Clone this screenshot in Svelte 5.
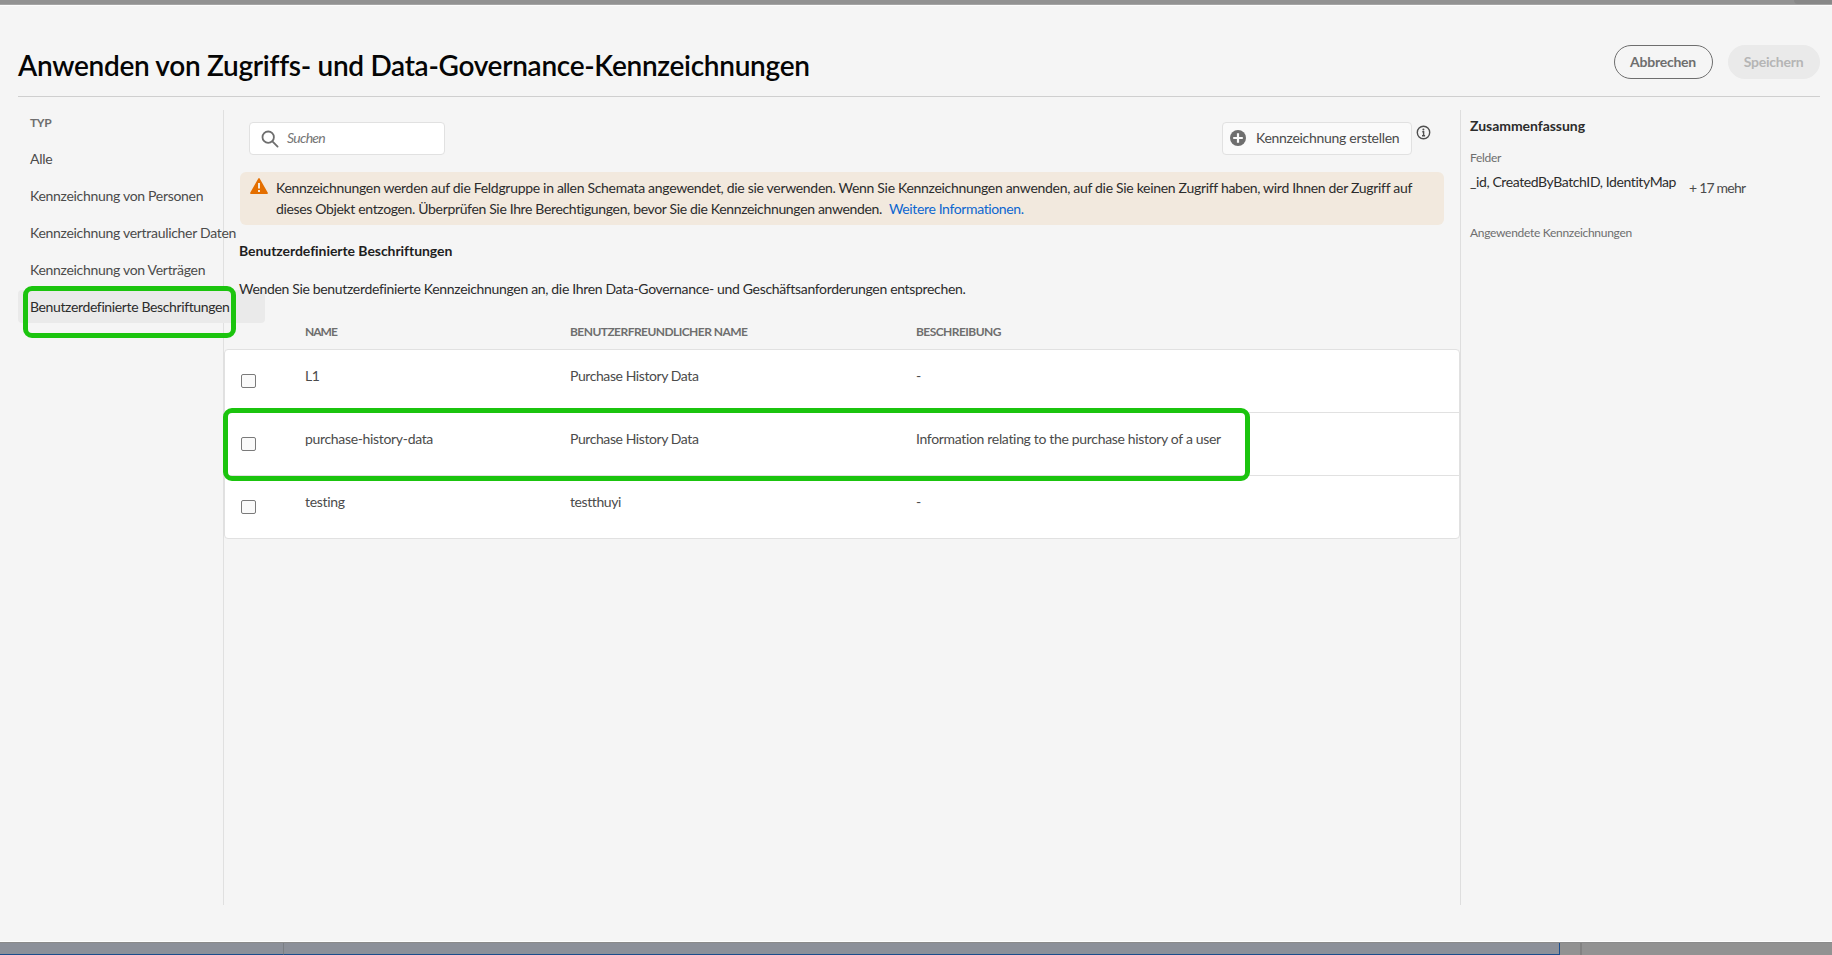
<script>
  const types = [
    { label: 'Alle' },
    { label: 'Kennzeichnung von Personen' },
    { label: 'Kennzeichnung vertraulicher Daten' },
    { label: 'Kennzeichnung von Verträgen' },
    { label: 'Benutzerdefinierte Beschriftungen', selected: true }
  ];
  const rows = [
    { name: 'L1', friendly: 'Purchase History Data', description: '-' },
    { name: 'purchase-history-data', friendly: 'Purchase History Data', description: 'Information relating to the purchase history of a user', marked: true },
    { name: 'testing', friendly: 'testthuyi', description: '-' }
  ];
</script>

<div class="page">
  <div class="strip-top"><span></span></div>

  <div class="dialog">
    <header>
      <h1>Anwenden von Zugriffs- und Data-Governance-Kennzeichnungen</h1>
      <button class="pill">Abbrechen</button>
      <button class="pill disabled" disabled>Speichern</button>
    </header>

    <div class="body">
      <nav>
        <h2>TYP</h2>
        {#each types as t}
          <div class="item" class:selected={t.selected}>
            {t.label}
            {#if t.selected}<i class="mark"></i>{/if}
          </div>
        {/each}
      </nav>

      <main>
        <div class="tools">
          <div class="search">
            <svg width="18" height="18" viewBox="0 0 18 18"><circle cx="7.2" cy="7.2" r="5.7" /><path d="M11.4 11.4 16.6 16.6" /></svg>
            <span>Suchen</span>
          </div>
          <button class="create">
            <svg width="16" height="16" viewBox="0 0 16 16"><circle cx="8" cy="8" r="8" /><path d="M8 3.2v9.6M3.2 8h9.6" /></svg>
            Kennzeichnung erstellen
          </button>
          <svg class="info" width="15" height="15" viewBox="0 0 15 15"><circle cx="7.5" cy="7.5" r="6.2" /><path d="M6.3 6.8h1.3v3.8M6 10.7h3.1" /><circle class="dot" cx="7.4" cy="4.6" r="1" /></svg>
        </div>

        <div class="banner">
          <svg width="18" height="16" viewBox="0 0 18 16"><path class="tri" d="M8.3.5a.8.8 0 0 1 1.4 0l8.1 14.3a.8.8 0 0 1-.7 1.2H.9a.8.8 0 0 1-.7-1.2z" /><path class="bang" d="M8 5h2v5.6H8zM8 11.9h2v2H8z" /></svg>
          <p>
            <span class="l1">Kennzeichnungen werden auf die Feldgruppe in allen Schemata angewendet, die sie verwenden. Wenn Sie Kennzeichnungen anwenden, auf die Sie keinen Zugriff haben, wird Ihnen der Zugriff auf</span><br />
            <span class="l2">dieses Objekt entzogen. Überprüfen Sie Ihre Berechtigungen, bevor Sie die Kennzeichnungen anwenden.</span><span class="link">Weitere Informationen.</span>
          </p>
        </div>

        <h3>Benutzerdefinierte Beschriftungen</h3>
        <p class="desc">Wenden Sie benutzerdefinierte Kennzeichnungen an, die Ihren Data-Governance- und Geschäftsanforderungen entsprechen.</p>

        <div class="row head">
          <span></span><span class="n">NAME</span><span>BENUTZERFREUNDLICHER NAME</span><span>BESCHREIBUNG</span>
        </div>
        <div class="table">
          {#each rows as r}
            <div class="row">
              <span class="box"></span><span>{r.name}</span><span class="friendly">{r.friendly}</span><span>{r.description}</span>
              {#if r.marked}<i class="mark"></i>{/if}
            </div>
          {/each}
        </div>
      </main>

      <aside>
        <h4>Zusammenfassung</h4>
        <div class="label">Felder</div>
        <div class="fields"><span>_id, CreatedByBatchID, IdentityMap</span><span class="more">+ 17 mehr</span></div>
        <div class="label applied">Angewendete Kennzeichnungen</div>
      </aside>
    </div>
  </div>

  <div class="strip-bottom"><span class="a"></span><span class="b"></span><span class="c"></span></div>
</div>

<style>
  .page {
    width: 1832px;
    height: 955px;
    display: flex;
    flex-direction: column;
    overflow: hidden;
    background: #929292;
    color: #4b4b4b;
    font: 14px/20px Lato, "Noto Sans", sans-serif;
    letter-spacing: -0.33px;
    white-space: nowrap;
  }
  .page * { box-sizing: border-box; }
  h1, h2, h3, h4, p { margin: 0; }
  button { font: inherit; letter-spacing: inherit; padding: 0; }
  svg { display: block; flex: none; fill: none; }

  .strip-top { height: 5px; flex: none; border-bottom: 1px solid #a5a5a5; display: flex; justify-content: flex-end; }
  .strip-top span { width: 38px; background: #888; border-bottom-left-radius: 8px; }
  .dialog {
    height: 937px;
    flex: none;
    display: flex;
    flex-direction: column;
    background: #f5f5f5;
    border: solid #fdfdfd;
    border-width: 1px 0;
    padding: 0 12px 0 18px;
  }

  header { height: 91px; flex: none; display: flex; align-items: flex-start; border-bottom: 1px solid #cfcfcf; }
  h1 { flex: 1; padding-top: 39px; font-size: 28px; line-height: 40px; font-weight: 600; letter-spacing: -0.3px; color: #050505; }
  .pill {
    width: 99px;
    height: 34px;
    margin: 39px 15px 0 0;
    padding: 0 1px 1px 0;
    border: 1px solid #6e6e6e;
    border-radius: 17px;
    background: transparent;
    color: #6e6e6e;
    font-weight: 700;
    letter-spacing: -0.24px;
  }
  .pill.disabled { width: 92px; margin-right: 0; border-color: #eaeaea; background: #eaeaea; color: #b5b5b5; }

  .body { height: 795px; margin-top: 13px; display: grid; grid-template-columns: 206px 1237px 360px; }
  nav { border-right: 1px solid #e0e0e0; }
  h2 { height: 32px; padding: 3px 0 0 12px; font-size: 12px; line-height: 20px; font-weight: 700; letter-spacing: -0.4px; color: #6e6e6e; }
  .item { width: 247px; height: 33px; margin-bottom: 4px; padding-left: 12px; line-height: 33px; border-radius: 4px; letter-spacing: -0.3px; }
  .item.selected { position: relative; background: #eaeaea; color: #2c2c2c; letter-spacing: -0.37px; }
  .mark { position: absolute; border: 5px solid #1bc40e; border-radius: 9px; }
  .item .mark { left: 5px; top: -4px; width: 213px; height: 52px; }

  main { position: relative; min-width: 0; border-right: 1px solid #dedede; }
  .tools { display: flex; align-items: flex-start; padding: 12px 29px 0 25px; height: 62px; }
  .search { width: 196px; height: 33px; display: flex; align-items: center; gap: 8px; padding-left: 11px; background: #fff; border: 1px solid #e1e1e1; border-radius: 4px; }
  .search svg { stroke: #6e6e6e; stroke-width: 1.8; stroke-linecap: round; }
  .search span { padding-bottom: 1px; font-style: italic; letter-spacing: -0.7px; color: #757575; }
  .create {
    width: 190px;
    height: 33px;
    margin-left: auto;
    display: flex;
    align-items: center;
    gap: 10px;
    padding: 0 0 1px 7px;
    background: #fafafa;
    border: 1px solid #e1e1e1;
    border-radius: 4px;
    color: #4b4b4b;
    letter-spacing: -0.3px;
  }
  .create svg { fill: #6e6e6e; }
  .create path { stroke: #fafafa; stroke-width: 2.2; }
  .info { margin: 3px 0 0 4px; stroke: #4f4f4f; stroke-width: 1.4; }
  .info .dot { fill: #4f4f4f; stroke: none; }

  .banner { width: 1204px; height: 53px; margin-left: 16px; display: flex; gap: 8px; padding: 6px 0 0 10px; background: #f2e9de; border-radius: 6px; color: #2c2c2c; }
  .tri { fill: #e46f00; }
  .bang { fill: #f2e9de; }
  .banner p { line-height: 20.5px; }
  .l1 { letter-spacing: -0.305px; }
  .l2 { letter-spacing: -0.345px; }
  .link { margin-left: 7px; letter-spacing: -0.37px; color: #0d66d0; }

  h3 { margin: 16px 0 0 15px; font-size: 14px; line-height: 20px; font-weight: 700; letter-spacing: -0.06px; color: #1e1e1e; }
  .desc { margin: 18px 0 0 15px; color: #2c2c2c; }

  .row { position: relative; display: grid; grid-template-columns: 64px 265px 346px 1fr; height: 63px; padding-left: 16px; }
  .head { height: 50px; padding: 23px 0 0 17px; font-size: 12px; font-weight: 700; letter-spacing: -0.55px; color: #6e6e6e; }
  .head .n { letter-spacing: -1px; }
  .table { width: 1236px; background: #fff; border: 1px solid #e1e1e1; border-radius: 4px; }
  .table .row { padding-top: 16px; border-bottom: 1px solid #e1e1e1; }
  .table .row:last-child { height: 62px; border-bottom: 0; }
  .friendly { letter-spacing: -0.42px; }
  .box { width: 15px; height: 14px; margin-top: 8px; background: #fafafa; border: 1px solid #7a7a7a; border-radius: 2px; }
  .row .mark { left: -2px; top: -5px; width: 1027px; height: 73px; }

  aside { padding: 6px 0 0 9px; }
  h4 { font-size: 14px; line-height: 20px; font-weight: 700; letter-spacing: -0.04px; color: #2c2c2c; }
  .label { margin-top: 12px; font-size: 12px; letter-spacing: -0.29px; color: #6e6e6e; }
  .fields { display: flex; gap: 13px; margin-top: 4px; color: #2c2c2c; letter-spacing: -0.4px; }
  .more { padding-top: 6px; color: #4b4b4b; letter-spacing: -0.8px; }
  .applied { margin-top: 25px; }

  .strip-bottom { flex: 1; display: flex; border-top: 1px solid #8b8b8b; }
  .a { width: 284px; background: #8c9099; border-right: 1px solid #7b7f84; border-bottom: 1px solid #1c4d8c; }
  .b { width: 1276px; background: #8c9099; border: solid #1c4d8c; border-width: 0 1px 1px 0; }
  .c { width: 22px; border-right: 2px solid #828282; }
</style>
